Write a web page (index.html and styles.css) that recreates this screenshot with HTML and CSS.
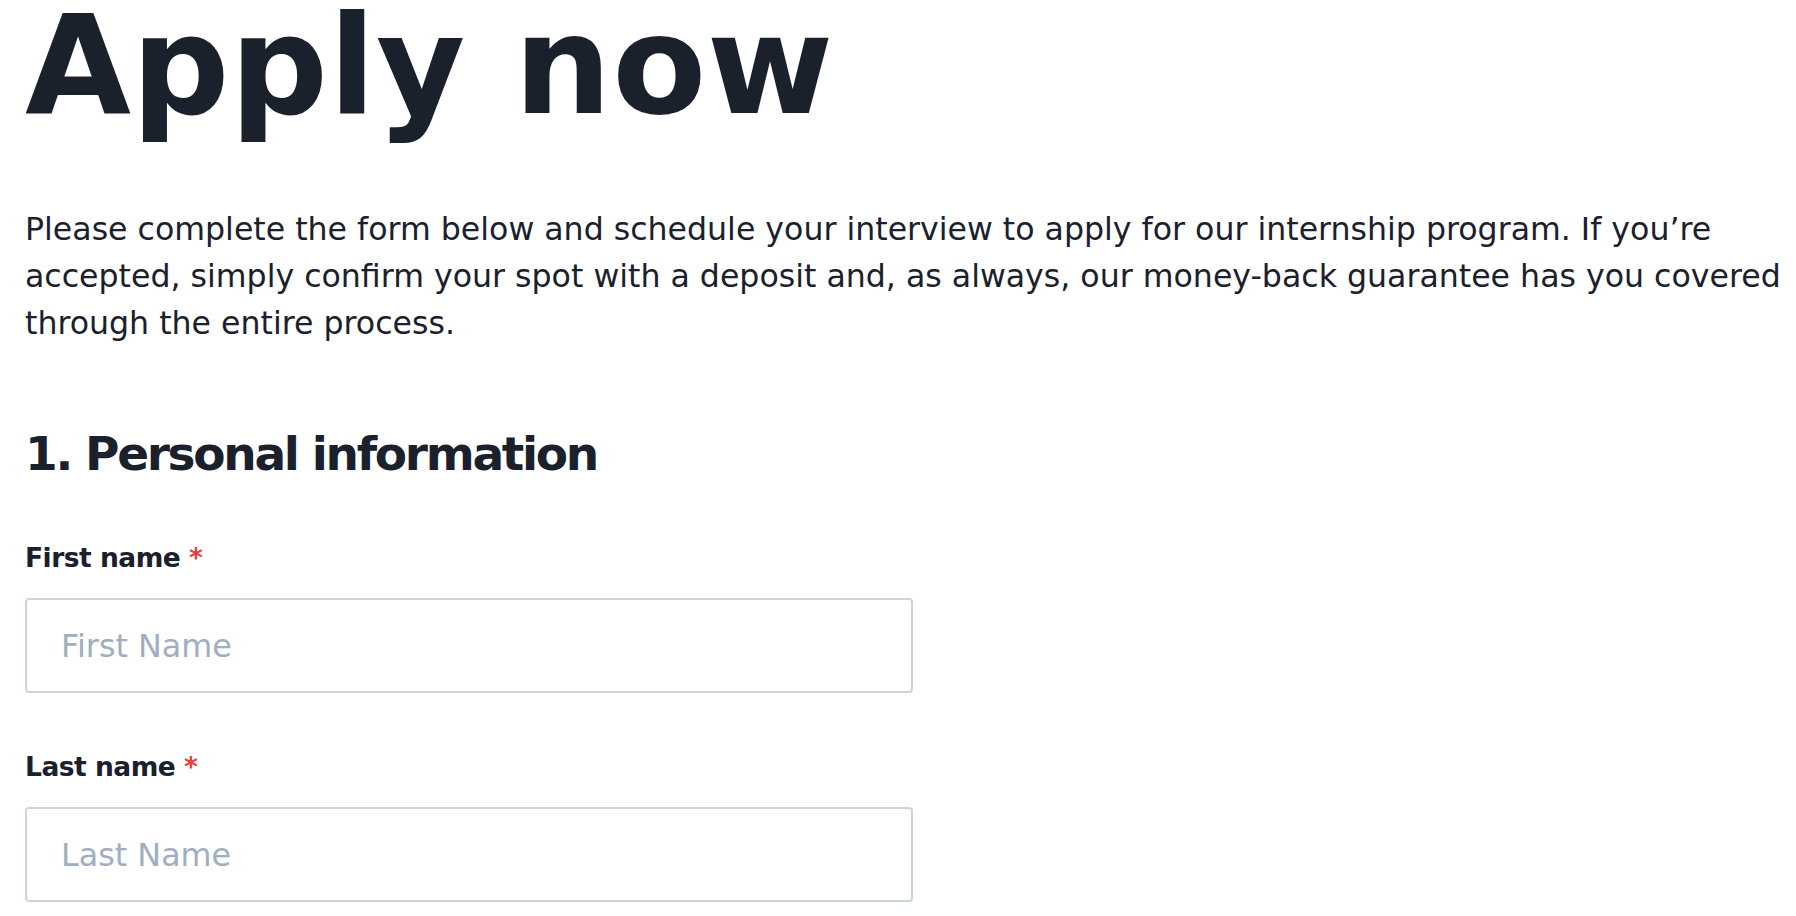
FILE: index.html
```html
<!DOCTYPE html>
<html lang="en">
<head>
<meta charset="utf-8">
<title>Apply now</title>
<link rel="stylesheet" href="styles.css">
</head>
<body>
<main class="page">
  <h1 class="title">Apply now</h1>
  <p class="intro">Please complete the form below and schedule your interview to apply for our internship program. If you’re accepted, simply confirm your spot with a deposit and, as always, our money-back guarantee has you covered through the entire process.</p>
  <h2 class="section-title">1. Personal information</h2>
  <form class="form">
    <div class="field">
      <label class="label" for="first">First name <span class="req">*</span></label>
      <input class="input" id="first" type="text" placeholder="First Name">
    </div>
    <div class="field">
      <label class="label" for="last">Last name <span class="req">*</span></label>
      <input class="input" id="last" type="text" placeholder="Last Name">
    </div>
  </form>
</main>
</body>
</html>
```

FILE: styles.css
```css
html, body {
  margin: 0;
  padding: 0;
  background: #ffffff;
}
body {
  font-family: "DejaVu Sans", "Noto Sans", sans-serif;
  color: #1a202c;
}
.page {
  padding: 0 6px 0 25px;
}
.title {
  margin: 0;
  font-size: 137px;
  line-height: 131px;
  font-weight: 700;
  letter-spacing: 0.5px;
}
.intro {
  margin: 75px 0 0;
  font-size: 31.6px;
  line-height: 47px;
  font-weight: 400;
}
.section-title {
  margin: 78px 0 0;
  font-size: 47px;
  line-height: 58px;
  font-weight: 700;
  letter-spacing: -2.3px;
}
.form {
  margin-top: 58px;
}
.field {
  display: flex;
  flex-direction: column;
  gap: 23px;
  margin-bottom: 57px;
}
.label {
  font-size: 26.5px;
  line-height: 34px;
  font-weight: 700;
  letter-spacing: -0.5px;
}
.req {
  color: #e53e3e;
}
.input {
  box-sizing: border-box;
  width: 888px;
  height: 95px;
  margin: 0;
  padding: 0 0 0 34px;
  border: 2px solid #cbd5e0;
  border-radius: 4px;
  font-family: inherit;
  font-size: 31.8px;
  color: #1a202c;
  background: #fff;
  outline: none;
}
.input::placeholder {
  color: #a0aec0;
  opacity: 1;
}
```
